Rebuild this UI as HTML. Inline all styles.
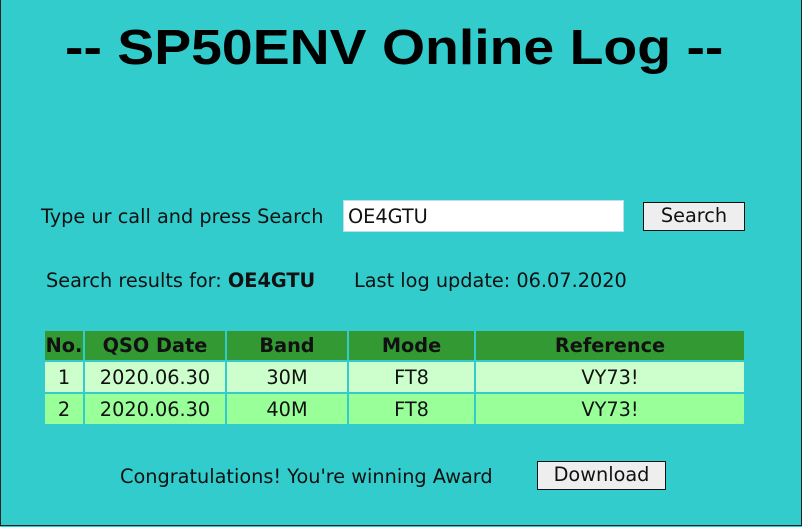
<!DOCTYPE html>
<html><head><meta charset="utf-8"><style>
body{margin:0;width:802px;height:527px;overflow:hidden;background:#33cccc;font-family:"DejaVu Sans","Liberation Sans",sans-serif;color:#111;position:relative}
.frame{position:absolute;left:0;top:0;width:800px;height:525px;border:1px solid #222;border-top:none;}
.a{position:absolute;white-space:nowrap}
h1{position:absolute;left:65px;top:20px;margin:0;white-space:nowrap;font-family:"Liberation Sans",sans-serif;font-weight:bold;font-size:49px;color:#000;transform-origin:0 0;transform:scaleX(1.13)}
.t{font-size:19.3px}
.btn{position:absolute;background:#eee;border:1.5px solid #111;box-sizing:border-box;font-size:19.3px;text-align:center}
table{position:absolute;left:43px;top:329px;border-collapse:separate;border-spacing:2px;font-size:19.3px}
td,th{padding:0;text-align:center}
th{background:#339933;height:29px;font-weight:bold}
tr.r1 td{background:#ccffcc;height:30px}
tr.r2 td{background:#99ff99;height:30px}
</style></head><body>
<div class="frame"></div>
<h1>-- SP50ENV Online Log --</h1>
<div class="a t" style="left:41px;top:205px">Type ur call and press Search</div>
<div class="a t" style="left:343px;top:200px;width:281px;height:32px;background:#fff;border:1px solid #bde;box-sizing:border-box;padding:4px 0 0 4px">OE4GTU</div>
<div class="btn" style="left:643px;top:202px;width:102px;height:29px;line-height:26px">Search</div>
<div class="a t" style="left:46px;top:269px">Search results for: <b>OE4GTU</b></div>
<div class="a t" style="left:354px;top:269px">Last log update: 06.07.2020</div>
<table>
<tr><th style="width:38px">No.</th><th style="width:140px">QSO Date</th><th style="width:120px">Band</th><th style="width:125px">Mode</th><th style="width:268px">Reference</th></tr>
<tr class="r1"><td>1</td><td>2020.06.30</td><td>30M</td><td>FT8</td><td>VY73!</td></tr>
<tr class="r2"><td>2</td><td>2020.06.30</td><td>40M</td><td>FT8</td><td>VY73!</td></tr>
</table>
<div class="a t" style="left:120px;top:465px">Congratulations! You're winning Award</div>
<div class="btn" style="left:537px;top:461px;width:129px;height:29px;line-height:26px">Download</div>
</body></html>
